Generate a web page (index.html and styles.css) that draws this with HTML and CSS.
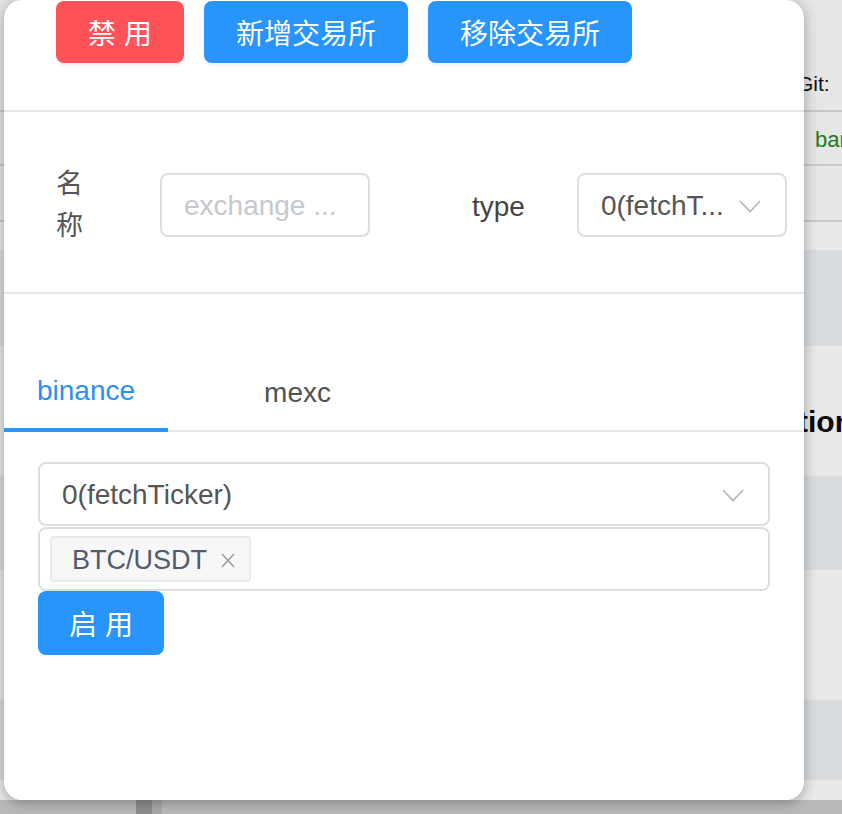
FILE: index.html
```html
<!DOCTYPE html>
<html lang="zh">
<head>
<meta charset="utf-8">
<title>交易所</title>
<link rel="stylesheet" href="styles.css">
</head>
<body>
<div class="page">
  <div class="prow prow-head"><span class="git">Git:</span></div>
  <div class="prow prow-branch"><span class="branch">banana</span></div>
  <div class="prow prow-empty"></div>
  <div class="band light b28"></div>
  <div class="band dark b96"></div>
  <div class="band light b130"><span class="heading">tions</span></div>
  <div class="band dark b94"></div>
  <div class="band light b130"></div>
  <div class="band dark b80"></div>
  <div class="band light b20"></div>
  <div class="footer"><span class="fbar"></span><span class="fbar2"></span></div>
</div>

<div class="modal">
  <div class="toolbar">
    <button class="btn btn-danger btn-w128">禁 用</button>
    <button class="btn btn-primary btn-w204">新增交易所</button>
    <button class="btn btn-primary btn-w204">移除交易所</button>
  </div>

  <div class="form-row">
    <label class="form-label label-name">名称</label>
    <input class="text-input" type="text" placeholder="exchange ..." readonly>
    <label class="form-label label-type">type</label>
    <div class="select select-small">
      <span class="select-value">0(fetchT...</span>
      <svg class="chevron" width="22" height="13" viewBox="0 0 22 13"><polyline points="1,1 11,11.5 21,1" fill="none" stroke="#b4b4b4" stroke-width="1.6"/></svg>
    </div>
  </div>

  <div class="tabs">
    <div class="tab tab-active">binance</div>
    <div class="tab">mexc</div>
  </div>

  <div class="tab-panel">
    <div class="select select-wide">
      <span class="select-value">0(fetchTicker)</span>
      <svg class="chevron" width="22" height="13" viewBox="0 0 22 13"><polyline points="1,1 11,11.5 21,1" fill="none" stroke="#b4b4b4" stroke-width="1.6"/></svg>
    </div>
    <div class="tag-box">
      <span class="tag">BTC/USDT
        <svg class="tag-close" width="14" height="15" viewBox="0 0 14 15"><path d="M1 1 L13 14 M13 1 L1 14" stroke="#9a9a9a" stroke-width="1.5" fill="none"/></svg>
      </span>
    </div>
    <button class="btn btn-primary btn-enable">启 用</button>
  </div>
</div>
</body>
</html>
```

FILE: styles.css
```css
* { box-sizing: border-box; }

html, body {
  margin: 0;
  padding: 0;
}

body {
  width: 842px;
  height: 814px;
  overflow: hidden;
  position: relative;
  background: #e2e2e2;
  font-family: "Liberation Sans", "Noto Sans CJK SC", sans-serif;
}

/* background page (dimmed) */
.page {
  display: flex;
  flex-direction: column;
  width: 842px;
  height: 814px;
}
.prow {
  border-bottom: 2px solid #c9c9c9;
  background: #e6e6e6;
  white-space: nowrap;
  overflow: hidden;
}
.prow-head {
  height: 112px;
  padding: 72px 0 0 797px;
  font-size: 21px;
  color: #111;
}
.prow-branch {
  height: 54px;
  padding: 15px 0 0 815px;
  font-size: 22px;
  color: #1e7a1e;
}
.prow-empty { height: 56px; }
.band {
  white-space: nowrap;
  overflow: hidden;
}
.light { background: #e9e9ea; }
.dark { background: #dadde0; }
.b28 { height: 28px; }
.b96 { height: 96px; }
.b130 { height: 130px; }
.b94 { height: 94px; }
.b80 { height: 80px; }
.b20 { height: 20px; }
.heading {
  display: block;
  padding: 59px 0 0 798px;
  font-size: 30px;
  font-weight: bold;
  color: #0a0a0a;
}
.footer {
  flex: 1;
  background: #b9b9b9;
  display: flex;
  padding-left: 136px;
}
.fbar { width: 16px; background: #8e8e8e; }
.fbar2 { width: 10px; background: #a9a9a9; }

/* modal */
.modal {
  position: absolute;
  left: 4px;
  top: 0;
  width: 800px;
  height: 800px;
  background: #fff;
  border-radius: 18px;
  box-shadow: 0 2px 14px rgba(0, 0, 0, 0.32);
  color: #515a6e;
}

.toolbar {
  height: 112px;
  padding: 1px 0 0 52px;
  display: flex;
  gap: 20px;
  align-items: flex-start;
  border-bottom: 2px solid #e6e6e6;
}

.btn {
  height: 62px;
  border: none;
  border-radius: 8px;
  color: #fff;
  font-family: "Liberation Sans", "Noto Sans CJK SC", sans-serif;
  font-size: 28px;
  padding: 0;
  box-shadow: 0 3px 3px rgba(0, 0, 0, 0.05);
  cursor: pointer;
}
.btn-danger { background: #ff5259; }
.btn-primary { background: #2795fb; }
.btn-w128 { width: 128px; }
.btn-w204 { width: 204px; }

.form-row {
  height: 182px;
  padding: 6px 0 0 52px;
  display: flex;
  align-items: center;
  border-bottom: 2px solid #e6e6e6;
}
.form-label {
  font-size: 28px;
  color: #555;
}
.label-name {
  width: 28px;
  font-size: 27px;
  line-height: 42px;
  margin: 0 76px 0 0;
}
.label-type {
  margin: 4px 52px 0 102px;
  color: #444;
}
.text-input {
  width: 210px;
  height: 64px;
  border: 2px solid #dcdee2;
  border-radius: 8px;
  padding: 2px 22px 0;
  font-family: "Liberation Sans", sans-serif;
  font-size: 28px;
  color: #555;
  outline: none;
}
.text-input::placeholder { color: #c5c8ce; }

.select {
  height: 64px;
  border: 2px solid #dcdee2;
  border-radius: 8px;
  display: flex;
  align-items: center;
  justify-content: space-between;
  padding: 2px 24px 0 22px;
  font-size: 28px;
  color: #555;
}
.select-small { width: 210px; }
.select-wide { width: 732px; }
.select-value { white-space: nowrap; }
.chevron { flex: none; }

.tabs {
  margin-top: 58px;
  display: flex;
  gap: 63px;
  border-bottom: 2px solid #e6e6e6;
}
.tab {
  height: 80px;
  line-height: 82px;
  padding: 0 33px;
  font-size: 28px;
  color: #515151;
  margin-bottom: -2px;
}
.tab-active {
  color: #2b8ff3;
  border-bottom: 4px solid #2795fb;
  line-height: 78px;
}

.tab-panel {
  padding: 30px 34px 0;
}
.tag-box {
  width: 732px;
  height: 64px;
  margin-top: 1px;
  border: 2px solid #dcdee2;
  border-radius: 8px;
  display: flex;
  align-items: center;
  padding-left: 10px;
}
.tag {
  height: 46px;
  display: inline-flex;
  align-items: center;
  gap: 14px;
  padding: 2px 14px 0 20px;
  background: #f7f7f7;
  border: 2px solid #e8eaec;
  border-radius: 4px;
  font-size: 27px;
  color: #515a6e;
}
.btn-enable {
  width: 126px;
  height: 64px;
  box-shadow: none;
}
```
